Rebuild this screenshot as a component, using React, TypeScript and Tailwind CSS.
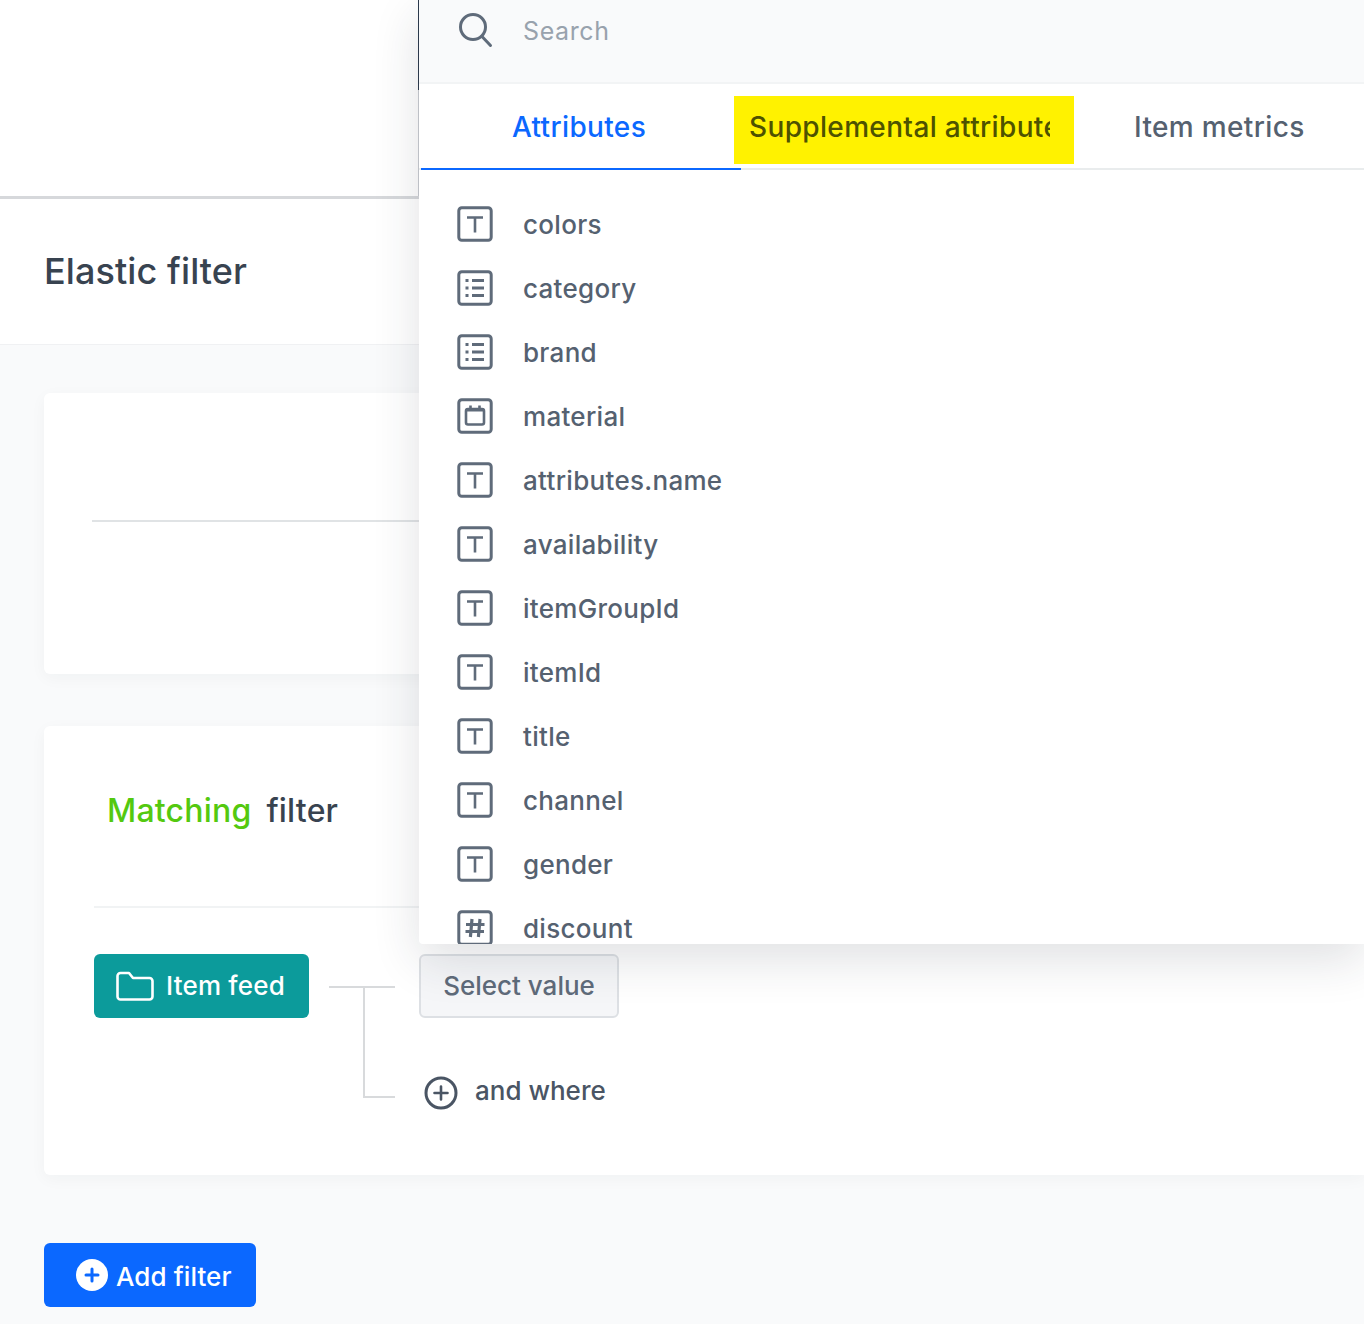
import React from "react";

const stroke = "#5f6b7a";

function Frame({ children }: { children: React.ReactNode }) {
  return (
    <svg width="36" height="36" viewBox="0 0 36 36" fill="none" stroke={stroke} strokeWidth="3" className="mt-[-1px] shrink-0">
      <rect x="1.8" y="1.8" width="32.4" height="32.4" rx="3" />
      {children}
    </svg>
  );
}

function TextIcon() {
  return (
    <Frame>
      <path d="M10 11.5h16M18 11.5v15" strokeWidth="2.6" />
    </Frame>
  );
}

function ListIcon() {
  return (
    <Frame>
      <path d="M15 10.5h12M15 18h12M15 25.5h12" strokeWidth="2.8" />
      <path d="M8.5 10.5h3M8.5 18h3M8.5 25.5h3" strokeWidth="3" />
    </Frame>
  );
}

function DateIcon() {
  return (
    <Frame>
      <rect x="9" y="11" width="18" height="15.5" rx="2" strokeWidth="2.6" />
      <path d="M9 12h18" strokeWidth="3" />
      <path d="M13.5 7.5v5M22.5 7.5v5" strokeWidth="2.6" />
    </Frame>
  );
}

function NumberIcon() {
  return (
    <Frame>
      <path d="M15 9l-1.6 18M23 9l-1.6 18M9 14.5h18.5M8.5 21.5h18.5" strokeWidth="3.2" />
    </Frame>
  );
}

const items: [string, React.ReactNode][] = [
  ["colors", <TextIcon />],
  ["category", <ListIcon />],
  ["brand", <ListIcon />],
  ["material", <DateIcon />],
  ["attributes.name", <TextIcon />],
  ["availability", <TextIcon />],
  ["itemGroupId", <TextIcon />],
  ["itemId", <TextIcon />],
  ["title", <TextIcon />],
  ["channel", <TextIcon />],
  ["gender", <TextIcon />],
  ["discount", <NumberIcon />],
];

function Dropdown() {
  return (
    <div className="absolute left-[419px] top-0 right-0 h-[944px] overflow-hidden rounded-bl-[4px] bg-white shadow-[0_16px_48px_rgba(35,41,54,0.14)]">
      <div className="flex h-[84px] items-start border-b-2 border-[#f2f4f5] bg-[#f9fafb] pl-[38px] pt-[12px]">
        <svg width="36" height="36" viewBox="0 0 36 36" fill="none" stroke={stroke} strokeWidth="3" className="shrink-0">
          <circle cx="16" cy="15" r="12.5" />
          <path d="M25 24.5l8.5 9" strokeLinecap="round" />
        </svg>
        <span className="ml-[30px] mt-[4px] text-[25px] leading-[30px] tracking-[0.6px] text-[#98a2ad]">Search</span>
      </div>
      <div className="relative flex h-[86px] border-b-2 border-[#e9eced] pl-[2px]">
        <div className="flex h-[86px] w-[320px] items-start justify-center border-b-2 border-[#0b68ff] pr-[4px] pt-[26px] text-[28px] font-medium leading-[34px] tracking-[0.35px] text-[#0b68ff]">
          Attributes
        </div>
        <div className="ml-[-7px] mt-[12px] h-[68px] w-[340px] bg-[#fff200] pl-[15px] pt-[14px] text-[28px] font-medium leading-[34px] tracking-[0.35px] text-[#4e5200]">
          <div className="w-[301px] overflow-hidden whitespace-nowrap">Supplemental attribute</div>
        </div>
        <div className="ml-[60px] pt-[26px] text-[28px] font-medium leading-[34px] tracking-[0.35px] whitespace-nowrap text-[#556170]">Item metrics</div>
      </div>
      <div className="flex flex-col pl-[38px] pt-[37px]">
        {items.map(([name, icon]) => (
          <div key={name} className="flex h-[64px] shrink-0 items-start">
            {icon}
            <span className="ml-[30px] mt-[3px] text-[26px] font-medium leading-[30px] tracking-[0.3px] text-[#556170]">{name}</span>
          </div>
        ))}
      </div>
    </div>
  );
}

function AddCircle() {
  return (
    <svg width="34" height="34" viewBox="0 0 34 34" fill="none" stroke="#4a5564" strokeWidth="3" className="shrink-0">
      <circle cx="17" cy="17" r="15" />
      <path d="M17 10.5v13M10.5 17h13" strokeWidth="2.6" strokeLinecap="round" />
    </svg>
  );
}

export default function App() {
  return (
    <div className="relative h-[1324px] w-[1364px] overflow-hidden bg-[#f9fafb] font-['Inter',sans-serif]">
      <div className="h-[199px] border-b-3 border-[#d6d8db] bg-white">
        <div className="ml-[418px] h-[196px] w-px bg-[#c9ccd1]">
          <div className="h-[90px] w-px bg-[#2c3a4d]" />
        </div>
      </div>
      <div className="flex h-[146px] items-start border-b border-[#f0f1f3] bg-white pl-[44px] pt-[49px]">
        <h1 className="text-[36px] font-medium leading-[46px] tracking-[0.1px] text-[#384350]">Elastic filter</h1>
      </div>
      <div className="pl-[44px] pt-[48px]">
        <div className="h-[281px] rounded-l-[6px] bg-white pl-[48px] pt-[127px] shadow-[0_4px_16px_rgba(35,41,54,0.04)]">
          <div className="h-[2px] bg-[#e0e3e5]" />
        </div>
        <div className="mt-[52px] h-[449px] rounded-l-[6px] bg-white pl-[50px] shadow-[0_4px_16px_rgba(35,41,54,0.04)]">
          <div className="flex h-[182px] items-start gap-[15px] border-b-2 border-[#f1f3f4] pl-[13px] pt-[65px] text-[32px] font-medium leading-[40px] tracking-[0.2px]">
            <span className="text-[#54c90f]">Matching</span>
            <span className="text-[#384350]">filter</span>
          </div>
          <div className="flex items-start pt-[46px]">
            <div className="flex h-[64px] w-[215px] items-center rounded-[6px] bg-[#0c9b9b] pl-[22px]">
              <svg width="38" height="30" viewBox="0 0 38 30" fill="none" stroke="#fff" strokeWidth="2.6" className="shrink-0">
                <path d="M1.5 5a3 3 0 013-3h8.5l4 5h16.5a3 3 0 013 3v15.5a3 3 0 01-3 3h-29a3 3 0 01-3-3z" strokeLinejoin="round" />
              </svg>
              <span className="ml-[12px] text-[26px] font-medium leading-[32px] tracking-[0.2px] text-white">Item feed</span>
            </div>
            <svg width="66" height="112" viewBox="0 0 66 112" fill="none" stroke="#d8dadc" strokeWidth="2" className="ml-[20px] mt-[32px] shrink-0">
              <path d="M0 1h66M35 1v110h31" />
            </svg>
            <div className="ml-[24px] flex flex-col">
              <div className="flex h-[64px] w-[200px] items-center justify-center rounded-[6px] border-2 border-[#dde0e4] bg-[#f5f6f8] text-[26px] font-medium leading-[32px] text-[#5f6b7a]">
                Select value
              </div>
              <div className="mt-[58px] flex items-start pl-[5px]">
                <AddCircle />
                <span className="ml-[17px] mt-[-1px] text-[26px] font-medium leading-[32px] text-[#4a5564]">and where</span>
              </div>
            </div>
          </div>
        </div>
        <div className="mt-[68px] flex h-[64px] w-[212px] items-center rounded-[6px] bg-[#0b68ff] pl-[32px]">
          <svg width="32" height="32" viewBox="0 0 32 32" fill="none" className="shrink-0">
            <circle cx="16" cy="16" r="16" fill="#fff" />
            <path d="M16 10v12M10 16h12" stroke="#0b68ff" strokeWidth="3" strokeLinecap="round" />
          </svg>
          <span className="ml-[8px] mt-[3px] text-[26px] font-medium leading-[32px] tracking-[0.1px] text-white">Add filter</span>
        </div>
      </div>
      <Dropdown />
    </div>
  );
}
